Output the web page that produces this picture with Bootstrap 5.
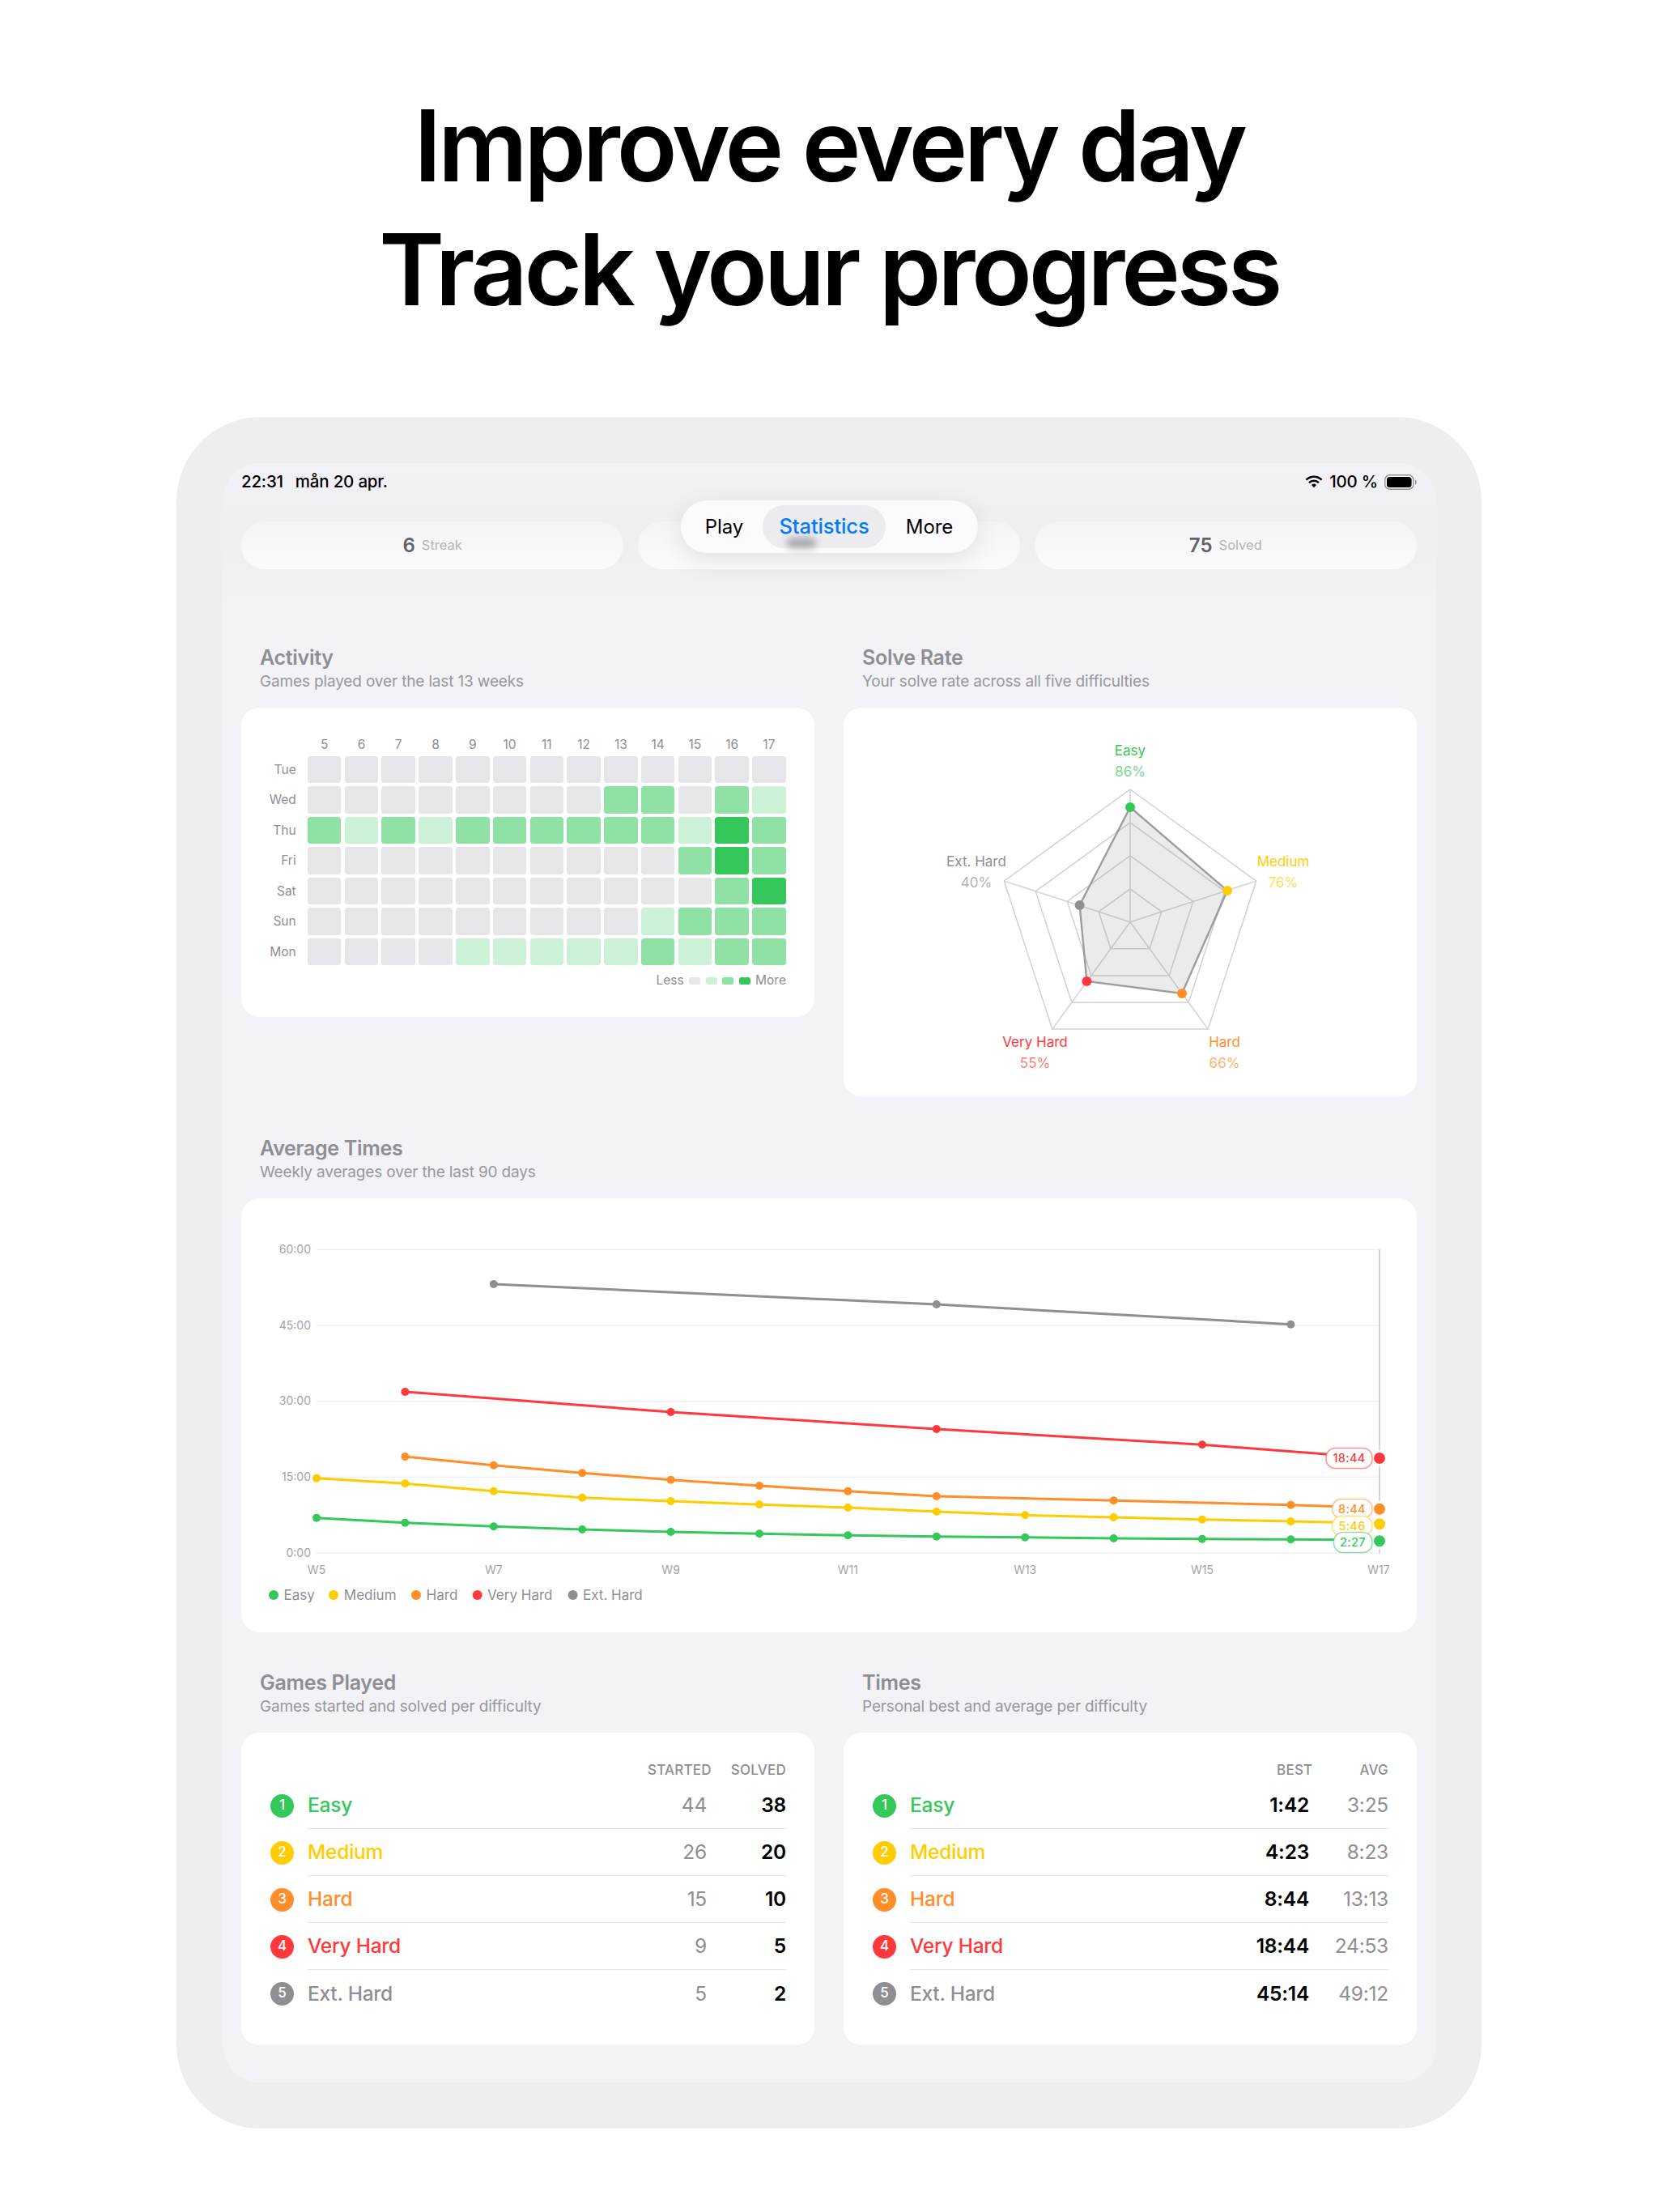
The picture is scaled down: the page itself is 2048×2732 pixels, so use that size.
<!DOCTYPE html>
<html lang="en">
<head>
<meta charset="utf-8">
<title>Improve every day</title>
<link rel="stylesheet" href="https://cdn.jsdelivr.net/npm/bootstrap@5.3.0/dist/css/bootstrap.min.css">
<script src="https://cdn.jsdelivr.net/npm/bootstrap@5.3.0/dist/js/bootstrap.bundle.min.js"></script>
<style>
body{margin:0;background:#fff;font-family:Inter,"Liberation Sans",sans-serif;color:#000;width:2048px;height:2732px;overflow:hidden}
.hero{height:515px;padding-top:103px;font-size:123px;line-height:153px;font-weight:600;letter-spacing:-.035em;text-align:center;color:#000}
.bezel{width:1612px;height:2114px;margin-left:218px;padding:57px 56px 57px 57px;background:#eeeeee;border-radius:104px}
.screen{position:relative;height:2000px;padding:0 24px 0 23px;border-radius:46px;background:linear-gradient(#f3f3f7 0,#eeeef3 60px,#eeeef3 110px,#f2f2f7 175px)}
.statusbar{height:46px;font-size:20.5px;font-weight:500;letter-spacing:-.2px}
.st-date{margin-left:15px}
.stat-row{margin-top:26px;height:59px;gap:17.5px}
.stat{flex:1 1 0;border-radius:30px;background:linear-gradient(#f4f4f7,#fbfbfc)}
.stat-num{font-size:24px;font-weight:600;color:#636366}
.stat-lbl{font-size:16.5px;color:#b4b4b8}
.tabs{position:absolute;left:566px;top:46px;width:367px;height:65px;padding:0 6px;background:#fbfbfe;border-radius:33px;box-shadow:0 10px 32px rgba(0,0,0,.09);font-size:24px;font-weight:400;letter-spacing:-.1px}
.tab-on{position:relative;height:53px;width:152px;border-radius:27px;background:#ebebf0;color:#007aff;font-size:25.5px;font-weight:500;letter-spacing:-.1px}
.tab-a{width:95px;text-align:center}
.tab-c{width:108px;text-align:center}
.tab-smear{position:absolute;left:30px;top:40px;width:36px;height:13px;background:#a9a9ae;filter:blur(4px);border-radius:6px}
.tab-label{position:relative}
.grid-two{--bs-gutter-x:36px;--bs-gutter-y:0}
.sec-head{padding-left:23px;margin-bottom:18px}
.sec-title{font-size:25px;line-height:30px;font-weight:600;color:#8e8e93;letter-spacing:-.3px}
.sec-sub{font-size:19px;line-height:29px;color:#98989d;letter-spacing:-.15px}
.panel{background:#fff;border-radius:22px}
.first-sec{margin-top:94px}
.mid-sec{margin-top:49px}
.next-sec{margin-top:47px}
.heat-wrap{padding:36px 35px 35px}
.heat{display:grid;grid-template-columns:42.7px repeat(13,41.5px);column-gap:4.27px;row-gap:3.95px;grid-auto-rows:33.5px;font-size:15.5px;color:#8e8e93}
.heat-top{height:20px;line-height:20px;text-align:center}
.heat-first{grid-template-rows:20px}
.heat-day{text-align:right;padding-right:10px;line-height:33.5px;margin-left:-20px}
.c0,.c1,.c2,.c3{border-radius:3.5px}
.c0{background:#e5e5ea}.c1{background:#cdf1d7}.c2{background:#8fe1a5}.c3{background:#34c759}
.sw{width:14px;height:9px;border-radius:2.5px}
.heat-legend{margin-top:9px;height:20px;font-size:15.5px;color:#8e8e93;gap:6.5px}
svg{display:block}
svg text{font-family:Inter,"Liberation Sans",sans-serif}
.t-wrap{padding:34px 35px 35px 36px}
.t-head{height:24px;line-height:24px;margin-bottom:3px;font-size:17px;font-weight:500;color:#8e8e93;letter-spacing:.2px}
.t-row{height:58px}
.dotnum{width:29px;height:29px;border-radius:50%;color:#fff;font-size:17px;font-weight:500;flex:none;margin-right:17px}
.t-inner{height:58px;border-bottom:1.5px solid #e3e3e6;font-size:24.5px;letter-spacing:-.25px}
.t-row:last-child .t-inner{border-bottom:0}
.t-name{font-weight:500;flex:1 1 auto}
.t-col{width:98px;text-align:right}
.t-h1{margin-right:24px}
.t-h3{margin-right:58px}
.t-dim{color:#8e8e93}
.t-strong{font-weight:600;color:#000}
.k-easy{color:#34c759}.k-med{color:#ffcc00}.k-hard{color:#ff8d28}.k-vh{color:#ff383c}.k-ext{color:#8e8e93}
.b-easy{background:#34c759}.b-med{background:#ffcc00}.b-hard{background:#ff8d28}.b-vh{background:#ff383c}.b-ext{background:#8e8e93}
</style>
</head>
<body>
<div class="hero">Improve every day<br>Track your progress</div>
<div class="bezel">
  <div class="screen">
    <div class="statusbar d-flex align-items-center justify-content-between">
      <div>22:31<span class="st-date">mån 20 apr.</span></div>
      <div class="d-flex align-items-center">
        <svg width="22" height="16" viewBox="0 0 22 16" class="me-2"><g fill="none" stroke="#000" stroke-width="2.4" stroke-linecap="butt"><path d="M1.4 5.6a13.8 13.8 0 0 1 19.2 0"/><path d="M5 9.2a8.6 8.6 0 0 1 12 0"/></g><path d="M8 12a4.3 4.3 0 0 1 6 0l-3 3.2z" fill="#000"/></svg>
        <span>100 %</span>
        <svg width="40" height="19" viewBox="0 0 40 19" class="ms-2"><rect x=".8" y=".8" width="35" height="17.4" rx="5.5" fill="#fff" stroke="#8e8e93" stroke-width="1.4"/><rect x="3" y="3" width="30.6" height="13" rx="3.6" fill="#000"/><path d="M38 6.5c1.3.5 1.7 1.6 1.7 3s-.4 2.500-1.700 3z" fill="#8e8e93"/></svg>
      </div>
    </div>
    <div class="tabs d-flex align-items-center">
      <div class="tab-a">Play</div>
      <div class="tab-on d-flex align-items-center justify-content-center"><span class="tab-smear"></span><span class="tab-label">Statistics</span></div>
      <div class="tab-c">More</div>
    </div>
    <div class="stat-row d-flex">
      <div class="stat d-flex align-items-center justify-content-center gap-2"><span class="stat-num">6</span><span class="stat-lbl">Streak</span></div>
      <div class="stat"></div>
      <div class="stat d-flex align-items-center justify-content-center gap-2"><span class="stat-num">75</span><span class="stat-lbl">Solved</span></div>
    </div>

    <div class="row grid-two first-sec align-items-start">
      <div class="col-6">
        <div class="sec-head"><div class="sec-title">Activity</div><div class="sec-sub">Games played over the last 13 weeks</div></div>
        <div class="panel heat-wrap">
          <div class="heat heat-first">
            <div class="heat-top"></div><div class="heat-top">5</div><div class="heat-top">6</div><div class="heat-top">7</div><div class="heat-top">8</div><div class="heat-top">9</div><div class="heat-top">10</div><div class="heat-top">11</div><div class="heat-top">12</div><div class="heat-top">13</div><div class="heat-top">14</div><div class="heat-top">15</div><div class="heat-top">16</div><div class="heat-top">17</div>
            <div class="heat-day">Tue</div><div class="c0"></div><div class="c0"></div><div class="c0"></div><div class="c0"></div><div class="c0"></div><div class="c0"></div><div class="c0"></div><div class="c0"></div><div class="c0"></div><div class="c0"></div><div class="c0"></div><div class="c0"></div><div class="c0"></div>
            <div class="heat-day">Wed</div><div class="c0"></div><div class="c0"></div><div class="c0"></div><div class="c0"></div><div class="c0"></div><div class="c0"></div><div class="c0"></div><div class="c0"></div><div class="c2"></div><div class="c2"></div><div class="c0"></div><div class="c2"></div><div class="c1"></div>
            <div class="heat-day">Thu</div><div class="c2"></div><div class="c1"></div><div class="c2"></div><div class="c1"></div><div class="c2"></div><div class="c2"></div><div class="c2"></div><div class="c2"></div><div class="c2"></div><div class="c2"></div><div class="c1"></div><div class="c3"></div><div class="c2"></div>
            <div class="heat-day">Fri</div><div class="c0"></div><div class="c0"></div><div class="c0"></div><div class="c0"></div><div class="c0"></div><div class="c0"></div><div class="c0"></div><div class="c0"></div><div class="c0"></div><div class="c0"></div><div class="c2"></div><div class="c3"></div><div class="c2"></div>
            <div class="heat-day">Sat</div><div class="c0"></div><div class="c0"></div><div class="c0"></div><div class="c0"></div><div class="c0"></div><div class="c0"></div><div class="c0"></div><div class="c0"></div><div class="c0"></div><div class="c0"></div><div class="c0"></div><div class="c2"></div><div class="c3"></div>
            <div class="heat-day">Sun</div><div class="c0"></div><div class="c0"></div><div class="c0"></div><div class="c0"></div><div class="c0"></div><div class="c0"></div><div class="c0"></div><div class="c0"></div><div class="c0"></div><div class="c1"></div><div class="c2"></div><div class="c2"></div><div class="c2"></div>
            <div class="heat-day">Mon</div><div class="c0"></div><div class="c0"></div><div class="c0"></div><div class="c0"></div><div class="c1"></div><div class="c1"></div><div class="c1"></div><div class="c1"></div><div class="c1"></div><div class="c2"></div><div class="c1"></div><div class="c2"></div><div class="c2"></div>
          </div>
          <div class="heat-legend d-flex align-items-center justify-content-end">
            <span>Less</span><span class="sw c0"></span><span class="sw c1"></span><span class="sw c2"></span><span class="sw c3"></span><span>More</span>
          </div>
        </div>
      </div>
      <div class="col-6">
        <div class="sec-head"><div class="sec-title">Solve Rate</div><div class="sec-sub">Your solve rate across all five difficulties</div></div>
        <div class="panel">
          <svg width="708" height="480" viewBox="1042 874 708 480">
            <g fill="none" stroke="#d1d1d6" stroke-width="1.5">
              <polygon points="1396,975 1551.7,1088.1 1492.2,1271.1 1299.8,1271.1 1240.3,1088.1"/>
              <polygon points="1396,1015.900 1512.8,1100.8 1468.2,1238 1323.8,1238 1279.2,1100.8"/>
              <polygon points="1396,1056.85 1473.8,1113.4 1444.1,1204.9 1347.9,1204.9 1318.2,1113.4"/>
              <polygon points="1396,1097.8 1434.9,1126.1 1420,1171.8 1372,1171.8 1357.1,1126.1"/>
              <path d="M1396 1138.7V975M1396 1138.7L1551.7 1088.1M1396 1138.700L1492.2 1271.1M1396 1138.7L1299.8 1271.1M1396 1138.7L1240.3 1088.1"/>
            </g>
            <polygon points="1396,997 1516,1100 1460,1227 1342.4,1212 1333.6,1118" fill="#8e8e93" fill-opacity=".18" stroke="#8e8e93" stroke-opacity=".85" stroke-width="2.4"/>
            <circle cx="1396" cy="997" r="6" fill="#34c759"/><circle cx="1516" cy="1100" r="6" fill="#ffcc00"/><circle cx="1460" cy="1227" r="6" fill="#ff8d28"/><circle cx="1342.4" cy="1212" r="6" fill="#ff383c"/><circle cx="1333.6" cy="1118" r="6" fill="#8e8e93"/>
            <g font-size="17" text-anchor="middle">
              <text x="1396" y="933" fill="#34c759">Easy</text><text x="1396" y="959" fill="#34c759" fill-opacity=".7">86%</text>
              <text x="1585" y="1070" fill="#ffcc00">Medium</text><text x="1585" y="1096" fill="#ffcc00" fill-opacity=".7">76%</text>
              <text x="1512.500" y="1293" fill="#ff8d28">Hard</text><text x="1512.500" y="1319" fill="#ff8d28" fill-opacity=".7">66%</text>
              <text x="1278.500" y="1293" fill="#ff383c">Very Hard</text><text x="1278.500" y="1319" fill="#ff383c" fill-opacity=".7">55%</text>
              <text x="1206" y="1070" fill="#8e8e93">Ext. Hard</text><text x="1206" y="1096" fill="#8e8e93" fill-opacity=".7">40%</text>
            </g>
          </svg>
        </div>
      </div>
    </div>

    <div class="mid-sec">
      <div class="sec-head"><div class="sec-title">Average Times</div><div class="sec-sub">Weekly averages over the last 90 days</div></div>
      <div class="panel">
        <svg width="1452" height="536" viewBox="298 1480 1452 536">
          <g stroke="#f0f0f2" stroke-width="1.5"><path d="M391 1543.3H1704M391 1637H1704M391 1730.7H1704M391 1824.3H1704M391 1918.3H1704"/></g>
          <path d="M1704 1543.3V1918.3" stroke="#c7c7cc" stroke-width="1.5"/>
          <g font-size="14" fill="#a3a3a8" text-anchor="end"><text x="384" y="1548">60:00</text><text x="384" y="1642">45:00</text><text x="384" y="1735">30:00</text><text x="384" y="1829">15:00</text><text x="384" y="1923">0:00</text></g>
          <g font-size="14" fill="#a3a3a8" text-anchor="middle"><text x="391" y="1944">W5</text><text x="609.800" y="1944">W7</text><text x="828.600" y="1944">W9</text><text x="1047.400" y="1944">W11</text><text x="1266.200" y="1944">W13</text><text x="1485" y="1944">W15</text><text x="1703" y="1944">W17</text></g>
          <g fill="none" stroke-width="3">
            <polyline stroke="#8e8e93" points="609.800,1586 1156.800,1611 1594.400,1635.700"/>
            <polyline stroke="#ff383c" points="500.400,1719 828.600,1744 1156.800,1765 1485,1784.300 1690,1800"/>
            <polyline stroke="#ff8d28" points="500.400,1799 609.800,1809.700 719.200,1819.300 828.600,1827.700 938,1835 1047.400,1841.700 1156.800,1848 1375.600,1853.300 1594.400,1858.700 1690,1862"/>
            <polyline stroke="#ffcc00" points="391,1825.700 500.400,1832.300 609.800,1841.700 719.200,1849.700 828.600,1854 938,1858.300 1047.400,1862 1156.800,1867 1266.200,1871.300 1375.600,1874 1485,1876.700 1594.400,1879 1690,1881"/>
            <polyline stroke="#34c759" points="391,1874.700 500.400,1880.700 609.800,1885.300 719.200,1889 828.600,1892 938,1894.300 1047.400,1896.300 1156.800,1897.700 1266.200,1898.700 1375.600,1900 1485,1900.700 1594.400,1901.300 1690,1902"/>
          </g>
          <g fill="#8e8e93"><circle cx="609.800" cy="1586" r="5"/><circle cx="1156.800" cy="1611" r="5"/><circle cx="1594.400" cy="1635.700" r="5"/></g>
          <g fill="#ff383c"><circle cx="500.400" cy="1719" r="5"/><circle cx="828.600" cy="1744" r="5"/><circle cx="1156.800" cy="1765" r="5"/><circle cx="1485" cy="1784.300" r="5"/></g>
          <g fill="#ff8d28"><circle cx="500.400" cy="1799" r="5"/><circle cx="609.800" cy="1809.700" r="5"/><circle cx="719.200" cy="1819.300" r="5"/><circle cx="828.600" cy="1827.700" r="5"/><circle cx="938" cy="1835" r="5"/><circle cx="1047.400" cy="1841.700" r="5"/><circle cx="1156.800" cy="1848" r="5"/><circle cx="1375.600" cy="1853.300" r="5"/><circle cx="1594.400" cy="1858.700" r="5"/></g>
          <g fill="#ffcc00"><circle cx="391" cy="1825.700" r="5"/><circle cx="500.400" cy="1832.300" r="5"/><circle cx="609.800" cy="1841.700" r="5"/><circle cx="719.200" cy="1849.700" r="5"/><circle cx="828.600" cy="1854" r="5"/><circle cx="938" cy="1858.300" r="5"/><circle cx="1047.400" cy="1862" r="5"/><circle cx="1156.800" cy="1867" r="5"/><circle cx="1266.200" cy="1871.300" r="5"/><circle cx="1375.600" cy="1874" r="5"/><circle cx="1485" cy="1876.700" r="5"/><circle cx="1594.400" cy="1879" r="5"/></g>
          <g fill="#34c759"><circle cx="391" cy="1874.700" r="5"/><circle cx="500.400" cy="1880.700" r="5"/><circle cx="609.800" cy="1885.300" r="5"/><circle cx="719.200" cy="1889" r="5"/><circle cx="828.600" cy="1892" r="5"/><circle cx="938" cy="1894.300" r="5"/><circle cx="1047.400" cy="1896.300" r="5"/><circle cx="1156.800" cy="1897.700" r="5"/><circle cx="1266.200" cy="1898.700" r="5"/><circle cx="1375.600" cy="1900" r="5"/><circle cx="1485" cy="1900.700" r="5"/><circle cx="1594.400" cy="1901.300" r="5"/></g>
          <g stroke="#fff" stroke-width="3"><circle cx="1704" cy="1801" r="8.500" fill="#ff383c"/><circle cx="1704" cy="1863.700" r="8.500" fill="#ff8d28"/><circle cx="1704" cy="1882.300" r="8.500" fill="#ffcc00"/><circle cx="1704" cy="1903.300" r="8.500" fill="#34c759"/></g>
          <g font-size="14.500" font-weight="500" text-anchor="middle" letter-spacing=".3">
            <rect x="1638" y="1788.500" width="57" height="25" rx="11.500" fill="#fff" stroke="#ff383c" stroke-opacity=".55" stroke-width="1.500"/><text x="1666.500" y="1806" fill="#ff383c">18:44</text>
            <rect x="1645.500" y="1851.500" width="49.500" height="23.500" rx="11.500" fill="#fff" stroke="#ff8d28" stroke-opacity=".55" stroke-width="1.500"/><text x="1670" y="1869" fill="#ff8d28">8:44</text>
            <rect x="1645.500" y="1872.500" width="49.500" height="24" rx="11.500" fill="#fff" stroke="#ffcc00" stroke-opacity=".55" stroke-width="1.500"/><text x="1670" y="1890" fill="#ffcc00">5:46</text>
            <rect x="1647.500" y="1892.500" width="47.500" height="25" rx="11.500" fill="#fff" stroke="#34c759" stroke-opacity=".55" stroke-width="1.500"/><text x="1671" y="1910" fill="#34c759">2:27</text>
          </g>
          <g font-size="17" fill="#8e8e93">
            <circle cx="338" cy="1970" r="6" fill="#34c759"/><text x="350.500" y="1976">Easy</text>
            <circle cx="412" cy="1970" r="6" fill="#ffcc00"/><text x="424.800" y="1976">Medium</text>
            <circle cx="514" cy="1970" r="6" fill="#ff8d28"/><text x="526.600" y="1976">Hard</text>
            <circle cx="589.700" cy="1970" r="6" fill="#ff383c"/><text x="602" y="1976">Very Hard</text>
            <circle cx="707.600" cy="1970" r="6" fill="#8e8e93"/><text x="720" y="1976">Ext. Hard</text>
          </g>
        </svg>
      </div>
    </div>

    <div class="row grid-two next-sec align-items-start">
      <div class="col-6">
        <div class="sec-head"><div class="sec-title">Games Played</div><div class="sec-sub">Games started and solved per difficulty</div></div>
        <div class="panel t-wrap">
          <div class="t-head d-flex justify-content-end"><span class="t-h1">STARTED</span><span>SOLVED</span></div>
          <div>
            <div class="t-row d-flex align-items-center"><span class="dotnum b-easy d-flex align-items-center justify-content-center">1</span><div class="t-inner flex-grow-1 d-flex align-items-center"><span class="t-name k-easy">Easy</span><span class="t-col t-dim">44</span><span class="t-col t-strong">38</span></div></div>
            <div class="t-row d-flex align-items-center"><span class="dotnum b-med d-flex align-items-center justify-content-center">2</span><div class="t-inner flex-grow-1 d-flex align-items-center"><span class="t-name k-med">Medium</span><span class="t-col t-dim">26</span><span class="t-col t-strong">20</span></div></div>
            <div class="t-row d-flex align-items-center"><span class="dotnum b-hard d-flex align-items-center justify-content-center">3</span><div class="t-inner flex-grow-1 d-flex align-items-center"><span class="t-name k-hard">Hard</span><span class="t-col t-dim">15</span><span class="t-col t-strong">10</span></div></div>
            <div class="t-row d-flex align-items-center"><span class="dotnum b-vh d-flex align-items-center justify-content-center">4</span><div class="t-inner flex-grow-1 d-flex align-items-center"><span class="t-name k-vh">Very Hard</span><span class="t-col t-dim">9</span><span class="t-col t-strong">5</span></div></div>
            <div class="t-row d-flex align-items-center"><span class="dotnum b-ext d-flex align-items-center justify-content-center">5</span><div class="t-inner flex-grow-1 d-flex align-items-center"><span class="t-name k-ext">Ext. Hard</span><span class="t-col t-dim">5</span><span class="t-col t-strong">2</span></div></div>
          </div>
        </div>
      </div>
      <div class="col-6">
        <div class="sec-head"><div class="sec-title">Times</div><div class="sec-sub">Personal best and average per difficulty</div></div>
        <div class="panel t-wrap">
          <div class="t-head d-flex justify-content-end"><span class="t-h3">BEST</span><span>AVG</span></div>
          <div>
            <div class="t-row d-flex align-items-center"><span class="dotnum b-easy d-flex align-items-center justify-content-center">1</span><div class="t-inner flex-grow-1 d-flex align-items-center"><span class="t-name k-easy">Easy</span><span class="t-col t-strong">1:42</span><span class="t-col t-dim">3:25</span></div></div>
            <div class="t-row d-flex align-items-center"><span class="dotnum b-med d-flex align-items-center justify-content-center">2</span><div class="t-inner flex-grow-1 d-flex align-items-center"><span class="t-name k-med">Medium</span><span class="t-col t-strong">4:23</span><span class="t-col t-dim">8:23</span></div></div>
            <div class="t-row d-flex align-items-center"><span class="dotnum b-hard d-flex align-items-center justify-content-center">3</span><div class="t-inner flex-grow-1 d-flex align-items-center"><span class="t-name k-hard">Hard</span><span class="t-col t-strong">8:44</span><span class="t-col t-dim">13:13</span></div></div>
            <div class="t-row d-flex align-items-center"><span class="dotnum b-vh d-flex align-items-center justify-content-center">4</span><div class="t-inner flex-grow-1 d-flex align-items-center"><span class="t-name k-vh">Very Hard</span><span class="t-col t-strong">18:44</span><span class="t-col t-dim">24:53</span></div></div>
            <div class="t-row d-flex align-items-center"><span class="dotnum b-ext d-flex align-items-center justify-content-center">5</span><div class="t-inner flex-grow-1 d-flex align-items-center"><span class="t-name k-ext">Ext. Hard</span><span class="t-col t-strong">45:14</span><span class="t-col t-dim">49:12</span></div></div>
          </div>
        </div>
      </div>
    </div>
  </div>
</div>
</body>
</html>
